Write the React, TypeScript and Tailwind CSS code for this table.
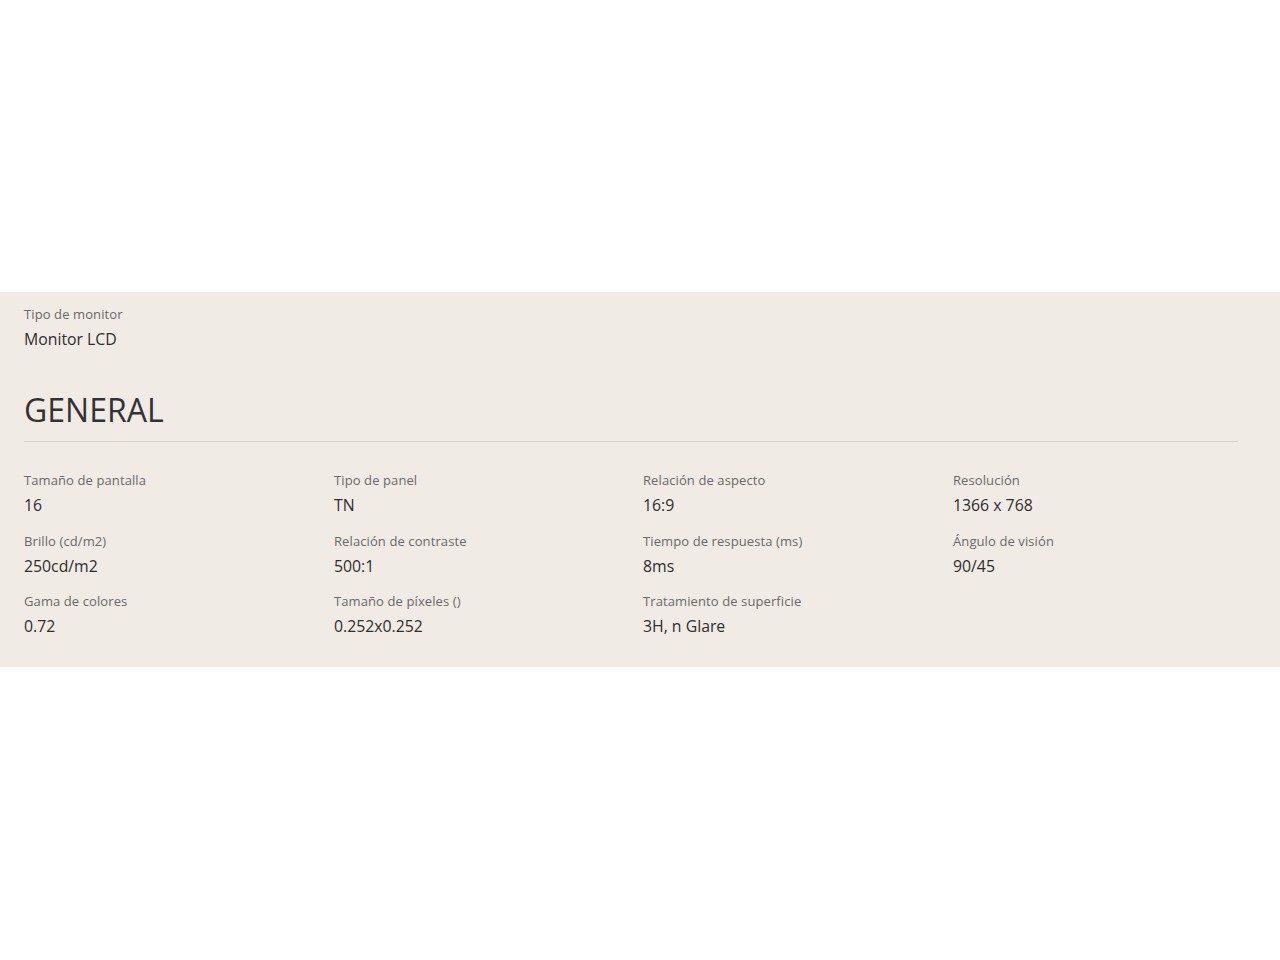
import React from "react";

const specs: [string, string][] = [
  ["Tamaño de pantalla", "16"],
  ["Tipo de panel", "TN"],
  ["Relación de aspecto", "16:9"],
  ["Resolución", "1366 x 768"],
  ["Brillo (cd/m2)", "250cd/m2"],
  ["Relación de contraste", "500:1"],
  ["Tiempo de respuesta (ms)", "8ms"],
  ["Ángulo de visión", "90/45"],
  ["Gama de colores", "0.72"],
  ["Tamaño de píxeles ()", "0.252x0.252"],
  ["Tratamiento de superficie", "3H, n Glare"],
];

function Item({ label, value }: { label: string; value: string }) {
  return (
    <div className="flex flex-col">
      <div className="text-[13px] leading-[20px] text-[#6a6a6a] tracking-[0.1px]">{label}</div>
      <div className="mt-1 text-[15.8px] leading-[22px] text-[#2e2e2e]">{value}</div>
    </div>
  );
}

export default function App() {
  return (
    <div
      className="w-[1280px] h-[960px] bg-white"
      style={{ fontFamily: '"Open Sans", "Noto Sans", sans-serif' }}
    >
      <div className="h-[292px]" />
      <section className="bg-[#f0ebe5] pl-6 pr-[42px] pt-3 pb-[30px]">
        <Item label="Tipo de monitor" value="Monitor LCD" />
        <h2 className="mt-10 text-[32px] leading-[40px] text-[#333] font-normal">
          GENERAL
        </h2>
        <div className="mt-[11px] h-px bg-[#d8d3cd]" />
        <div className="mt-[28px] grid grid-cols-[310px_309px_310px_1fr] gap-y-[14.5px]">
          {specs.map(([l, v]) => (
            <Item key={l} label={l} value={v} />
          ))}
        </div>
      </section>
    </div>
  );
}
